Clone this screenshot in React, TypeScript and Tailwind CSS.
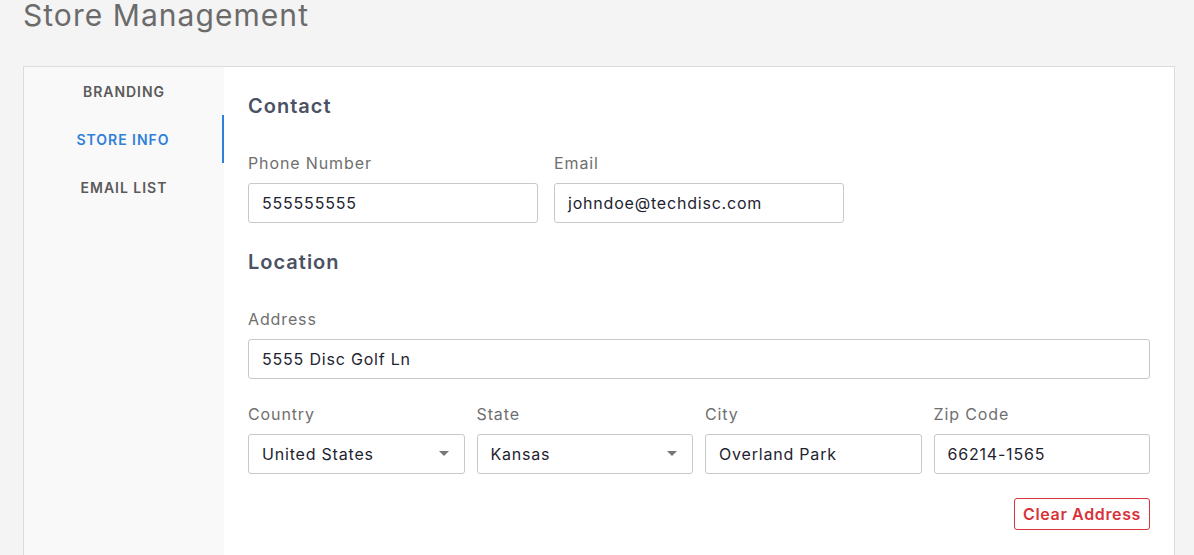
import React from "react";

const font = { fontFamily: "Inter, 'Open Sans', sans-serif" };

function Field({ label, value, select }: { label: string; value: string; select?: boolean }) {
  return (
    <div className="flex flex-col">
      <div className="text-[16px] leading-[20px] tracking-[0.055em] text-[#6f6f6f] mb-[10px]">{label}</div>
      <div className="h-[40px] border border-[#c8c8c8] rounded-[3px] bg-white flex items-center pl-[13px] pr-[14px]">
        <span className="text-[16px] tracking-[0.05em] text-[#1e2330] flex-1">{value}</span>
        {select && (
          <svg width="10" height="6" viewBox="0 0 10 6" className="mr-[1px]">
            <path d="M0 0 L10 0 L5 5 Z" fill="#777" />
          </svg>
        )}
      </div>
    </div>
  );
}

export default function App() {
  return (
    <div className="w-[1194px] h-[555px] bg-[#f4f4f4] overflow-hidden" style={font}>
      <div className="pl-[23px] pt-0">
        <h1 className="text-[30px] leading-[30px] tracking-[0.035em] text-[#6b6b6b] font-normal">Store Management</h1>
      </div>
      <div className="ml-[23px] mt-[36px] w-[1152px] h-[600px] border border-[#dcdcdc] bg-white flex">
        <div className="w-[200px] bg-[#f9f9f9] flex flex-col">
          <div className="h-[48px] flex items-center justify-center text-[14px] tracking-[0.07em] font-semibold text-[#5a5a5a]">BRANDING</div>
          <div className="h-[48px] flex items-center justify-center text-[14px] tracking-[0.07em] font-semibold text-[#2f80d8] border-r-[2px] border-[#2f80d8]">STORE INFO</div>
          <div className="h-[48px] flex items-center justify-center text-[14px] tracking-[0.07em] font-semibold text-[#5a5a5a]">EMAIL LIST</div>
        </div>
        <div className="flex-1 pl-[24px] pr-[24px] pt-[26px]">
          <h2 className="text-[20px] leading-[26px] tracking-[0.05em] font-semibold text-[#4a5263]">Contact</h2>
          <div className="mt-[34px] flex gap-[16px]">
            <div className="w-[290px]"><Field label="Phone Number" value="555555555" /></div>
            <div className="w-[290px]"><Field label="Email" value="johndoe@techdisc.com" /></div>
          </div>
          <h2 className="mt-[26px] text-[20px] leading-[26px] tracking-[0.05em] font-semibold text-[#4a5263]">Location</h2>
          <div className="mt-[34px]">
            <Field label="Address" value="5555 Disc Golf Ln" />
          </div>
          <div className="mt-[25px] grid grid-cols-4 gap-[12px]">
            <Field label="Country" value="United States" select />
            <Field label="State" value="Kansas" select />
            <Field label="City" value="Overland Park" />
            <Field label="Zip Code" value="66214-1565" />
          </div>
          <div className="mt-[24px] flex justify-end">
            <button className="h-[32px] px-[8px] border border-[#d8333a] rounded-[3px] text-[#d8333a] text-[16px] tracking-[0.04em] font-semibold bg-white">Clear Address</button>
          </div>
        </div>
      </div>
    </div>
  );
}
